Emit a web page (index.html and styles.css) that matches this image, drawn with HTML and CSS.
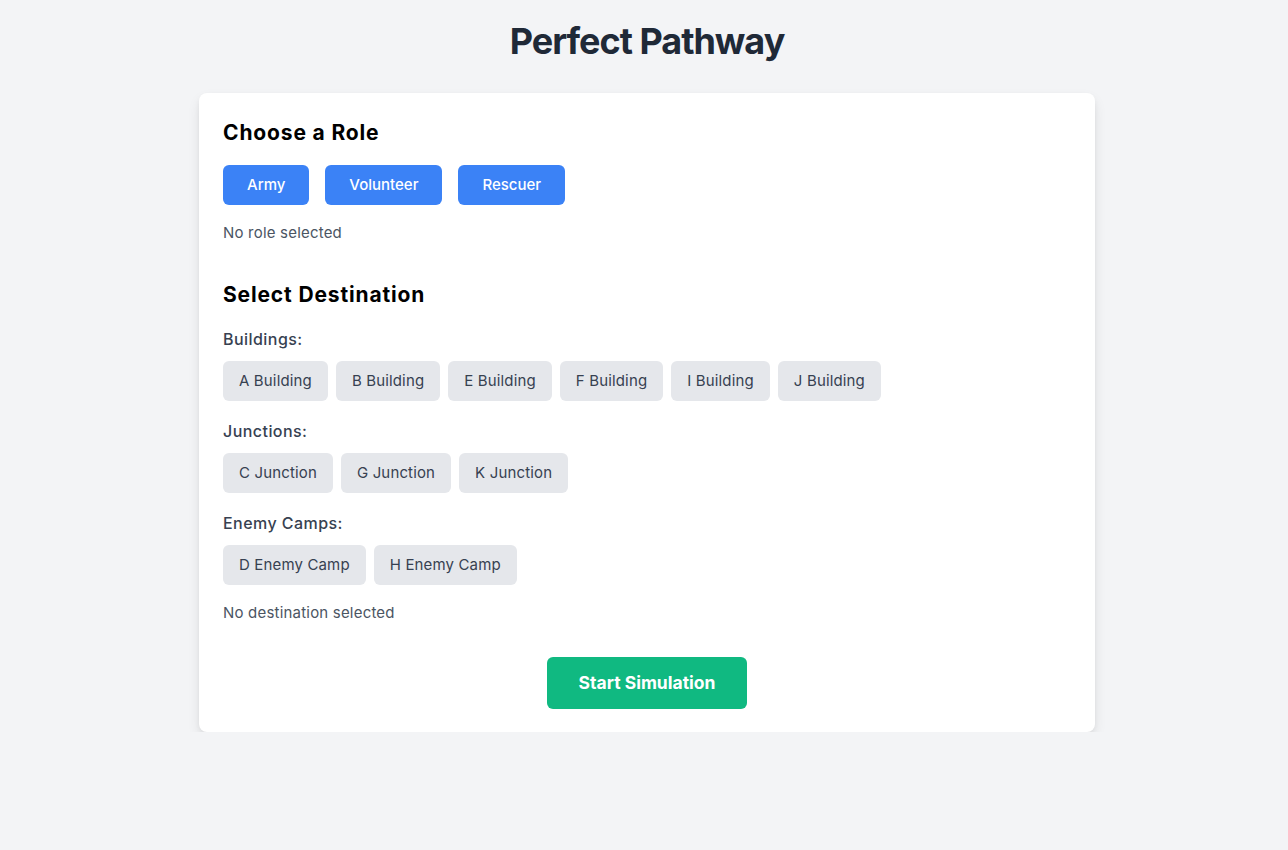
FILE: index.html
```html
<!DOCTYPE html>
<html lang="en">
<head>
<meta charset="utf-8">
<title>Perfect Pathway</title>
<link rel="stylesheet" href="styles.css">
</head>
<body>
<div class="page">
  <h1 class="title">Perfect Pathway</h1>
  <div class="card">
    <section class="section">
      <h2 class="heading">Choose a Role</h2>
      <div class="roles">
        <button class="role-btn">Army</button>
        <button class="role-btn">Volunteer</button>
        <button class="role-btn">Rescuer</button>
      </div>
      <p class="status">No role selected</p>
    </section>
    <section class="section dest">
      <h2 class="heading">Select Destination</h2>
      <div class="group">
        <div class="group-label">Buildings:</div>
        <div class="options">
          <button class="opt-btn">A Building</button>
          <button class="opt-btn">B Building</button>
          <button class="opt-btn">E Building</button>
          <button class="opt-btn">F Building</button>
          <button class="opt-btn">I Building</button>
          <button class="opt-btn">J Building</button>
        </div>
      </div>
      <div class="group">
        <div class="group-label">Junctions:</div>
        <div class="options">
          <button class="opt-btn">C Junction</button>
          <button class="opt-btn">G Junction</button>
          <button class="opt-btn">K Junction</button>
        </div>
      </div>
      <div class="group">
        <div class="group-label">Enemy Camps:</div>
        <div class="options">
          <button class="opt-btn">D Enemy Camp</button>
          <button class="opt-btn">H Enemy Camp</button>
        </div>
      </div>
      <p class="status">No destination selected</p>
    </section>
    <div class="actions">
      <button class="start-btn">Start Simulation</button>
    </div>
  </div>
</div>
</body>
</html>
```

FILE: styles.css
```css
* { box-sizing: border-box; }
html, body { margin: 0; padding: 0; }
body {
  background: #f3f4f6;
  font-family: Inter, "Noto Sans", "Liberation Sans", sans-serif;
  color: #111827;
}
.page {
  padding: 21px 0 0 6px;
  display: flex;
  flex-direction: column;
  align-items: center;
}
.title {
  margin: 0 0 32px 0;
  font-size: 36px;
  line-height: 40px;
  font-weight: 700;
  color: #1f2937;
  letter-spacing: -1px;
}
.card {
  width: 896px;
  background: #ffffff;
  border-radius: 8px;
  box-shadow: 0 6px 14px -2px rgba(0,0,0,0.12), 0 2px 6px -2px rgba(0,0,0,0.08);
  padding: 26px 24px 23px 24px;
}
.heading {
  margin: 0;
  font-size: 21px;
  line-height: 28px;
  font-weight: 700;
  color: #000000;
  letter-spacing: 0.85px;
}
.section .heading { margin-bottom: 18px; }
.roles {
  display: flex;
  gap: 16px;
}
button {
  font-family: inherit;
  border: none;
  cursor: pointer;
}
.role-btn {
  background: #3b82f6;
  color: #ffffff;
  font-size: 15px;
  line-height: 24px;
  padding: 8px 24px;
  border-radius: 6px;
  font-weight: 500;
}
.status {
  margin: 16px 0 0 0;
  font-size: 15px;
  line-height: 24px;
  color: #4b5563;
  letter-spacing: 0.2px;
}
.dest { margin-top: 36px; }
.dest .heading { margin-bottom: 18px; }
.group { margin-bottom: 18px; }
.group-label {
  font-size: 16px;
  line-height: 24px;
  color: #374151;
  font-weight: 500;
  letter-spacing: 0.45px;
  margin-bottom: 10px;
}
.options {
  display: flex;
  flex-wrap: wrap;
  gap: 8px;
}
.opt-btn {
  background: #e5e7eb;
  color: #374151;
  font-size: 15px;
  line-height: 24px;
  letter-spacing: 0.15px;
  padding: 8px 16px;
  border-radius: 6px;
}
.dest .status { margin-top: -2px; }
.actions {
  display: flex;
  justify-content: center;
  margin-top: 32px;
}
.start-btn {
  background: #10b981;
  color: #ffffff;
  font-size: 17.5px;
  line-height: 28px;
  font-weight: 700;
  padding: 12px 32px;
  border-radius: 6px;
}
```
